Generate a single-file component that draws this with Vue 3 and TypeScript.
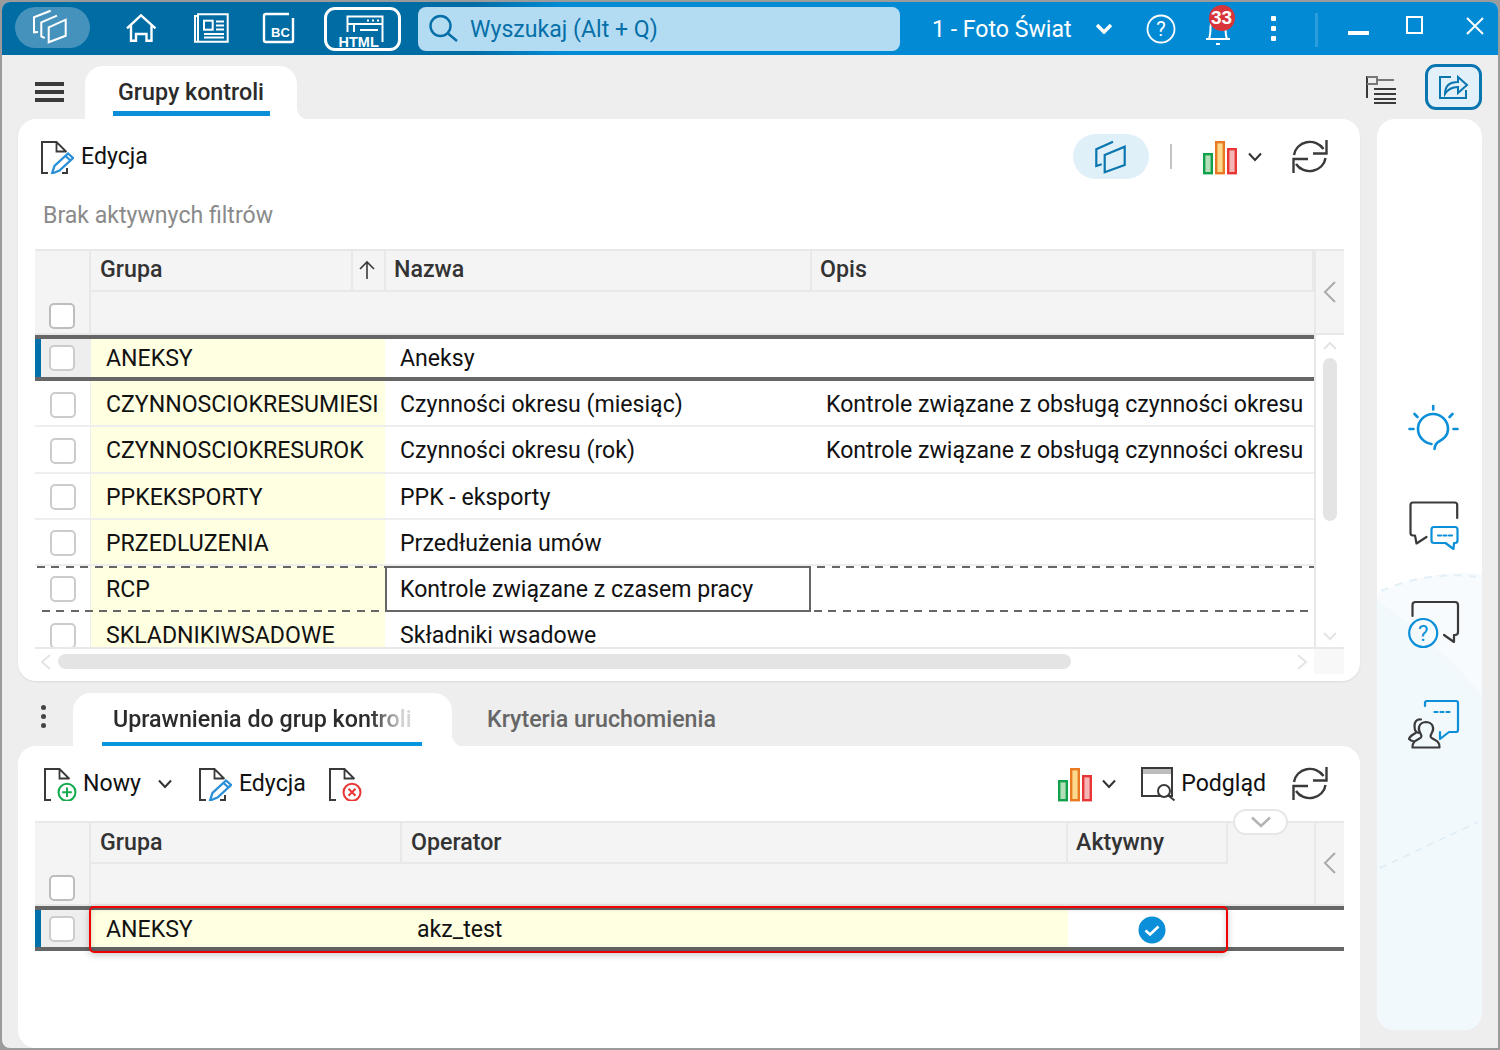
<script setup lang="ts">
interface Row { code: string; name: string; desc: string; sel?: boolean; focus?: boolean }
const rows: Row[] = [
  { code: 'ANEKSY', name: 'Aneksy', desc: '', sel: true },
  { code: 'CZYNNOSCIOKRESUMIESI', name: 'Czynności okresu (miesiąc)', desc: 'Kontrole związane z obsługą czynności okresu' },
  { code: 'CZYNNOSCIOKRESUROK', name: 'Czynności okresu (rok)', desc: 'Kontrole związane z obsługą czynności okresu' },
  { code: 'PPKEKSPORTY', name: 'PPK - eksporty', desc: '' },
  { code: 'PRZEDLUZENIA', name: 'Przedłużenia umów', desc: '' },
  { code: 'RCP', name: 'Kontrole związane z czasem pracy', desc: '', focus: true },
  { code: 'SKLADNIKIWSADOWE', name: 'Składniki wsadowe', desc: '' },
]
</script>

<template>
  <div class="window">
    <svg class="defs" aria-hidden="true">
      <defs>
        <symbol id="doc" viewBox="40 139 34 34">
          <path d="M57 141H42v31h6M62 172h5v-5" fill="none" stroke="#3a3a3a" stroke-width="2" />
          <path d="M56.500 141v9.500H66M56.500 141l10 10" fill="none" stroke="#3a3a3a" stroke-width="1.800" />
        </symbol>
        <symbol id="chart" viewBox="1202 138 36 36">
          <rect x="1204.200" y="153.200" width="7.600" height="19" fill="#b5dfb9" stroke="#12a14b" stroke-width="2.400" />
          <rect x="1216.200" y="141.200" width="7.600" height="31" fill="#fbd98d" stroke="#ea7a22" stroke-width="2.400" />
          <rect x="1228.200" y="148.200" width="7.600" height="24" fill="#f5b5b5" stroke="#e83535" stroke-width="2.400" />
        </symbol>
        <symbol id="refresh" viewBox="1290 137 40 38">
          <path d="M1294 155a16 15 0 0 1 29.500-6M1326.500 140v13.500H1313M1325.500 158a16 15 0 0 1-29.500 6M1293.500 173v-14h14.500" fill="none" stroke="#3a3a3a" stroke-width="2.400" />
        </symbol>
      </defs>
    </svg>

    <header class="titlebar">
      <div class="app-pill">
        <svg width="36" height="36" viewBox="34 10 36 36" fill="none" stroke="#fff" stroke-width="2">
          <path d="M52.700 11.700 36 18.300v15l4-.3M59 16.700l-15.700 6.600v14l3.400 1.700M50.700 28.300l17-7.600v16l-17 6.600z" />
        </svg>
      </div>
      <svg class="ti home" width="36" height="36" viewBox="124 12 36 36" fill="none" stroke="#fff" stroke-width="2.400">
        <path d="M127 29.300 141 16.300l14.500 13M131 26v15.700h5V35h10.500v6.700h5V26" />
      </svg>
      <svg class="ti news" width="36" height="36" viewBox="193 11 36 36" fill="none" stroke="#fff" stroke-width="2">
        <path d="M198 17h-3v25.700h32.700V15.300H198v27.400" />
        <rect x="204" y="21.700" width="8.700" height="9" />
        <path d="M216 22.500h8M216 26.500h8M216 30.500h8M204 35h20M204 38.500h20" />
      </svg>
      <svg class="ti bc" width="36" height="36" viewBox="263 11 36 36" fill="none" stroke="#fff" stroke-width="2.400">
        <path d="M290 15h-23a2 2 0 0 0-2 2v24a2 2 0 0 0 2 2h26a1 1 0 0 0 1-1V19" />
        <text x="272" y="38" class="svg-bold" font-size="13" fill="#fff" stroke="none">BC</text>
      </svg>
      <div class="html-btn">
        <svg width="77" height="44" viewBox="324 7 77 44" fill="none" stroke="#fff" stroke-width="2">
          <path d="M347.500 32V16.500h35V42M347.500 24h34.500M354 24v8M360 30h18" />
          <path d="M367 20.500h2M372 20.500h2M377 20.500h2" />
          <text x="338.500" y="47" class="svg-bold" font-size="14.500" fill="#fff" stroke="none">HTML</text>
        </svg>
      </div>
      <div class="search">
        <svg width="32" height="32" viewBox="428 13 32 32" fill="none" stroke="#066fa8" stroke-width="2.400">
          <circle cx="440.500" cy="26" r="10" /><path d="M448 33.500 457 41" />
        </svg>
        <span>Wyszukaj (Alt + Q)</span>
      </div>
      <span class="company">1 - Foto Świat</span>
      <svg class="ti chev" width="20" height="14" viewBox="0 0 20 14" fill="none" stroke="#fff" stroke-width="3.400">
        <path d="M3 3l7 7 7-7" />
      </svg>
      <svg class="ti help" width="30" height="30" viewBox="0 0 30 30" fill="none" stroke="#fff" stroke-width="1.800">
        <circle cx="15" cy="15" r="13.500" />
        <text x="15" y="22" text-anchor="middle" class="svg-reg" font-size="20" fill="#fff" stroke="none">?</text>
      </svg>
      <div class="bell">
        <svg width="26" height="32" viewBox="0 0 26 32" fill="none" stroke="#fff" stroke-width="2">
          <path d="M1 25h24M4 25c1.500-4 1.500-8 1.500-12a7.500 7.500 0 0 1 15 0c0 4 0 8 1.500 12M11 30h4" />
        </svg>
        <b class="badge">33</b>
      </div>
      <div class="kebab"><i /><i /><i /></div>
      <div class="title-sep" />
      <div class="win-min" />
      <div class="win-max" />
      <svg class="win-close" width="18" height="18" viewBox="0 0 18 18" stroke="#fff" stroke-width="2"><path d="M1 1l16 16M17 1 1 17" /></svg>
    </header>

    <div class="top-strip">
      <div class="burger"><i /><i /><i /></div>
      <div class="tab main-tab"><span>Grupy kontroli</span></div>
      <svg class="tree" width="32" height="30" viewBox="1365 76 32 30" fill="none" stroke="#3a3a3a" stroke-width="2">
        <path d="M1367 77v22" /><path d="M1367 78h10v7h-10M1377 81h17" stroke="#777" />
        <path d="M1374 90h22M1374 95h22M1374 100h22M1374 104h22" />
      </svg>
      <div class="share-btn">
        <svg width="32" height="30" viewBox="1437 75 32 30" fill="none" stroke="#0a76b0" stroke-width="2">
          <path d="M1450 80h-11v21h26v-8" />
          <path d="M1444 97c0-8 5-12 13-12v-5l9 8-9 8v-6c-6 0-10 2-13 7z" />
        </svg>
      </div>
    </div>

    <div class="main">
      <div class="left">
        <section class="card card-top">
          <div class="toolbar tb-a">
            <svg class="ic34" viewBox="40 139 34 34">
              <use href="#doc" x="40" y="139" width="34" height="34" />
              <path d="M52 172.500l2.500-7.500 13.500-12.500 5 4.500-13.500 12.500zM65.500 155l5 4.500" fill="#fff" stroke="#2b8fd8" stroke-width="2.300" />
            </svg>
            <span class="tool-text ml7">Edycja</span>
            <div class="view-pill">
              <svg width="34" height="36" viewBox="1095 139 34 36" fill="none" stroke="#0a76b0" stroke-width="2.200">
                <path d="M1105.700 155l20-8.300V165l-20 7.300zM1114 141.700l-16.700 7.600V166l5.400-1.700" />
              </svg>
            </div>
            <div class="tool-sep" />
            <svg class="chart-a" width="36" height="36"><use href="#chart" width="36" height="36" /></svg>
            <svg class="chev-a" width="16" height="10" viewBox="0 0 16 10" fill="none" stroke="#333" stroke-width="2"><path d="M2 1.500l6 6.500 6-6.500" /></svg>
            <svg class="refresh-a" width="40" height="38"><use href="#refresh" width="40" height="38" /></svg>
          </div>
          <div class="filters">Brak aktywnych filtrów</div>

          <div class="table">
            <div class="head head-a">
              <div class="hc check-cell"><span class="cb" /></div>
              <div class="hc title">Grupa</div>
              <div class="hc sort">
                <svg width="18" height="20" viewBox="0 0 18 20" fill="none" stroke="#3a3a3a" stroke-width="1.600"><path d="M9 19V2M2 9l7-7 7 7" /></svg>
              </div>
              <div class="hc title t8">Nazwa</div>
              <div class="hc title t8">Opis</div>
              <div class="hc side">
                <svg width="14" height="24" viewBox="0 0 14 24" fill="none" stroke="#aaa" stroke-width="2"><path d="M12 2 2 12l10 10" /></svg>
              </div>
              <div class="hc filter-row" />
            </div>
            <div class="body">
              <div class="rows">
                <div v-for="r in rows" :key="r.code" class="row" :class="{ sel: r.sel, focus: r.focus }">
                  <div class="c-check"><span class="cb" /></div>
                  <div class="c-code">{{ r.code }}</div>
                  <div class="c-name">{{ r.name }}</div>
                  <div class="c-desc">{{ r.desc }}</div>
                </div>
              </div>
              <div class="vscroll">
                <svg width="14" height="9" viewBox="0 0 14 9" fill="none" stroke="#e4e4e4" stroke-width="2"><path d="M1 8l6-6 6 6" /></svg>
                <div class="v-thumb" />
                <svg class="v-down" width="14" height="9" viewBox="0 0 14 9" fill="none" stroke="#e4e4e4" stroke-width="2"><path d="M1 1l6 6 6-6" /></svg>
              </div>
            </div>
            <div class="hscroll">
              <svg width="12" height="16" viewBox="0 0 12 16" fill="none" stroke="#e4e4e4" stroke-width="2"><path d="M10 1 2 8l8 7" /></svg>
              <div class="h-thumb" />
              <svg class="h-right" width="12" height="16" viewBox="0 0 12 16" fill="none" stroke="#e4e4e4" stroke-width="2"><path d="M2 1l8 7-8 7" /></svg>
              <div class="h-corner" />
            </div>
          </div>
        </section>

        <div class="sub-strip">
          <div class="kebab dark"><i /><i /><i /></div>
          <div class="tab sub-tab"><span class="fade">Uprawnienia do grup kontroli</span></div>
          <span class="other-tab">Kryteria uruchomienia</span>
        </div>

        <section class="card card-bottom">
          <div class="toolbar tb-b">
            <svg class="ic34" viewBox="40 139 34 34">
              <use href="#doc" x="40" y="139" width="34" height="34" />
              <circle cx="64" cy="164.300" r="8.500" fill="#fff" stroke="#14ab50" stroke-width="2" />
              <path d="M64 159.500v9.600M59.200 164.300h9.600" stroke="#14ab50" stroke-width="2" />
            </svg>
            <span class="tool-text ml6">Nowy</span>
            <svg class="chev-b" width="16" height="10" viewBox="0 0 16 10" fill="none" stroke="#333" stroke-width="2"><path d="M2 1.500l6 6.500 6-6.500" /></svg>
            <svg class="ic34 ed-b" viewBox="40 139 34 34">
              <use href="#doc" x="40" y="139" width="34" height="34" />
              <path d="M52 172.500l2.500-7.500 13.500-12.500 5 4.500-13.500 12.500zM65.500 155l5 4.500" fill="#fff" stroke="#2b8fd8" stroke-width="2.300" />
            </svg>
            <span class="tool-text ml7">Edycja</span>
            <svg class="ic34 del-b" viewBox="40 139 34 34">
              <use href="#doc" x="40" y="139" width="34" height="34" />
              <circle cx="64" cy="164.300" r="8.500" fill="#fff" stroke="#e83535" stroke-width="2" />
              <path d="M60.500 160.800l7 7M67.500 160.800l-7 7" stroke="#e83535" stroke-width="2" />
            </svg>
            <svg class="chart-b" width="36" height="36"><use href="#chart" width="36" height="36" /></svg>
            <svg class="chev-c" width="16" height="10" viewBox="0 0 16 10" fill="none" stroke="#333" stroke-width="2"><path d="M2 1.500l6 6.500 6-6.500" /></svg>
            <svg class="prev-b" width="36" height="36" viewBox="1140 766 36 36" fill="none" stroke="#3a3a3a" stroke-width="2">
              <rect x="1142" y="768" width="30" height="28" />
              <rect x="1143" y="769" width="28" height="5" fill="#bdbdbd" stroke="none" />
              <circle cx="1164" cy="791" r="6" fill="#fff" /><path d="M1168.500 795.500l6 5" />
            </svg>
            <span class="tool-text ml5">Podgląd</span>
            <svg class="refresh-b" width="40" height="38"><use href="#refresh" width="40" height="38" /></svg>
          </div>

          <div class="table">
            <div class="head head-b">
              <div class="hc check-cell"><span class="cb" /></div>
              <div class="hc title">Grupa</div>
              <div class="hc title">Operator</div>
              <div class="hc title t8">Aktywny</div>
              <div class="hc blank" />
              <div class="hc side">
                <svg width="14" height="24" viewBox="0 0 14 24" fill="none" stroke="#aaa" stroke-width="2"><path d="M12 2 2 12l10 10" /></svg>
              </div>
              <div class="hc filter-row" />
            </div>
            <div class="collapse">
              <svg width="22" height="12" viewBox="0 0 22 12" fill="none" stroke="#b5b5b5" stroke-width="2.600"><path d="M2 1.500l9 8.500 9-8.500" /></svg>
            </div>
            <div class="row2 sel">
              <div class="c-check"><span class="cb" /></div>
              <div class="c-code">ANEKSY</div>
              <div class="c-op">akz_test</div>
              <div class="c-act">
                <svg width="28" height="28" viewBox="0 0 28 28"><circle cx="14" cy="14" r="13.500" fill="#0a8fd8" /><path d="M7.500 14.500l4.500 4 8.500-8" fill="none" stroke="#fff" stroke-width="2.600" /></svg>
              </div>
              <div />
              <div class="red-mark" />
            </div>
          </div>
        </section>
      </div>

      <aside class="panel">
        <svg class="panel-bg" viewBox="1377 119 105 911" aria-hidden="true">
          <path d="M1377 594C1410 578 1445 570 1482 574V1030H1377z" fill="#f7fbfe" />
          <path d="M1377 600C1420 630 1455 665 1482 695V1030H1377z" fill="#f2f9fd" />
          <path d="M1381 591C1410 578 1445 572 1476 577" fill="none" stroke="#e3f0f8" stroke-width="2" stroke-dasharray="8 7" />
          <path d="M1380 868 1478 822" fill="none" stroke="#dcecf6" stroke-width="1.500" stroke-dasharray="7 6" />
        </svg>
        <svg class="side-ic first" viewBox="1399.500 399 60 60" fill="none" stroke="#0a8fd8" stroke-width="2.600" stroke-linecap="round">
          <path d="M1431 444c-7-1-13.500-7-13.500-15a15 15 0 1 1 30 0c0 7-5 10-9 12.500-2 1-4 3-4.500 7.500" />
          <path d="M1432.700 406v3.500M1414 414l3 3M1449 417l3-3M1409 429h4M1453 429h4" />
        </svg>
        <svg class="side-ic" viewBox="1399.500 495 60 60" fill="none" stroke-width="2.200" stroke-linecap="round" stroke-linejoin="round">
          <path d="M1456.700 518v-13a2.500 2.500 0 0 0-2.500-2.500h-41.700a2.500 2.500 0 0 0-2.500 2.500v28a2.500 2.500 0 0 0 2.500 2.500h2l1.500 8 10-6.500" stroke="#3a3a3a" />
          <path d="M1433.500 527h21a2.500 2.500 0 0 1 2.500 2.500v11a2.500 2.500 0 0 1-2.500 2.500h-1l-.5 6-8-6h-11.500a2.500 2.500 0 0 1-2.500-2.500v-11a2.500 2.500 0 0 1 2.500-2.500z" stroke="#0a8fd8" />
          <path d="M1437.500 535.500h3M1443 535.500h3M1448.500 535.500h3" stroke="#0a8fd8" />
        </svg>
        <svg class="side-ic" viewBox="1399.500 595 60 60" fill="none" stroke-width="2.200" stroke-linecap="round" stroke-linejoin="round">
          <path d="M1412 616v-11a3 3 0 0 1 3-3h39.500a3 3 0 0 1 3 3v27a3 3 0 0 1-3 3h-1v7l-10-7" stroke="#3a3a3a" />
          <circle cx="1422.700" cy="633" r="14" stroke="#0a8fd8" />
          <text x="1422.700" y="641" text-anchor="middle" class="svg-reg" font-size="22" fill="#0a8fd8" stroke="none">?</text>
        </svg>
        <svg class="side-ic" viewBox="1399.500 695 60 60" fill="none" stroke-width="2.200" stroke-linecap="round" stroke-linejoin="round">
          <path d="M1424.500 706v-3a2 2 0 0 1 2-2h29a2 2 0 0 1 2 2v27a2 2 0 0 1-2 2h-7l-9 7v-7" stroke="#0a8fd8" />
          <path d="M1434 712h3M1440 712h3M1446 712h3" stroke="#0a8fd8" />
          <path d="M1421 747.500h-9c0-6 3-7 7-9 3-1.500 2-3 .5-6-2-3-2-10 6-10.500 8 .5 8 7.500 6 10.500-1.500 3-2.500 4.500.5 6 4 2 7 3 7 9z" stroke="#3a3a3a" />
          <path d="M1419 733c-4 0-5-3-5-7 0-4 2-7 6.500-6.500M1415 733c-3 2-6 3-6.500 6 2 2 3 2 4 2" stroke="#3a3a3a" />
        </svg>
      </aside>
    </div>
  </div>
</template>

<style>
html, body { margin: 0; background: #9b9b9b; }
</style>

<style scoped>
.window {
  position: relative;
  width: 1496px;
  height: 1046px;
  margin: 2px;
  overflow: hidden;
  display: flex;
  flex-direction: column;
  background: #eeeeee;
  border-radius: 8px 8px 0 8px;
  font-family: Roboto, "Liberation Sans", sans-serif;
  font-size: 23.1px;
  color: #111;
}
.defs { position: absolute; width: 0; height: 0; }
svg { display: block; flex: none; }
.svg-bold { font-family: "Liberation Sans", sans-serif; font-weight: 700; }
.svg-reg { font-family: Roboto, sans-serif; }

.titlebar {
  flex: none;
  height: 53px;
  display: flex;
  align-items: center;
  background: linear-gradient(90deg, #006ca4 0, #006ca4 470px, #028bd4 560px);
  color: #fff;
}
.app-pill {
  margin-left: 13px;
  width: 75px;
  height: 41px;
  border-radius: 21px;
  background: #4593bd;
  display: flex;
  align-items: center;
  padding-left: 17px;
  box-sizing: border-box;
  margin-top: -3px;
}
.ti.home { margin-left: 34px; }
.ti.news { margin-left: 33px; margin-top: -2px; }
.ti.bc { margin-left: 33px; margin-top: -2px; }
.html-btn {
  margin-left: 26px;
  width: 77px;
  height: 44px;
  box-sizing: border-box;
  border: 3px solid #fff;
  border-radius: 11px;
  position: relative;
  margin-top: 1px;
  overflow: hidden;
}
.html-btn svg { position: absolute; left: -3px; top: -3px; }
.search {
  margin-left: 17px;
  width: 482px;
  height: 44px;
  margin-top: 1px;
  box-sizing: border-box;
  background: #b3dcf2;
  border-radius: 8px;
  display: flex;
  align-items: center;
  padding-left: 10px;
  color: #066fa8;
}
.search span { margin-left: 10px; }
.company { margin-left: 32px; margin-top: 1px; }
.chev { margin-left: 22px; }
.help { margin-left: 32px; }
.bell { position: relative; margin-left: 29px; width: 26px; height: 32px; margin-top: 2px; }
.badge {
  position: absolute;
  left: 4px;
  top: -9px;
  width: 26px;
  height: 26px;
  border-radius: 50%;
  background: #d8343a;
  color: #fff;
  font: 700 19px/26px "Liberation Sans", sans-serif;
  text-align: center;
}
.kebab { display: flex; flex-direction: column; gap: 5px; margin-left: 40px; }
.kebab i { width: 5px; height: 5px; background: #fff; border-radius: 1px; }
.kebab.dark { margin-left: 0; gap: 4px; margin-top: 0; width: 5px; flex: none; }
.kebab.dark i { background: #444; border-radius: 50%; }
.title-sep { width: 3px; height: 34px; background: #2a9ddd; margin-left: 39px; margin-top: 2px; }
.win-min { width: 21px; height: 4px; background: #fff; margin-left: 30px; margin-top: 8px; }
.win-max { width: 17px; height: 18px; box-sizing: border-box; border: 2px solid #fff; margin-left: 37px; margin-top: -8px; }
.win-close { margin-left: 43px; margin-top: -6px; }

.top-strip {
  flex: none;
  height: 64px;
  display: flex;
  align-items: flex-end;
  position: relative;
}
.burger { display: flex; flex-direction: column; gap: 4px; margin-left: 33px; margin-bottom: 17px; }
.burger i { width: 29px; height: 4px; background: #3a3a3a; }
.tab {
  position: relative;
  background: #fff;
  border-radius: 18px 18px 0 0;
  box-sizing: border-box;
  font-weight: 500;
  font-size: 23.250px;
  color: #2b2b2b;
}
.tab::after {
  content: "";
  position: absolute;
  right: -9px;
  bottom: 0;
  width: 10px;
  height: 16px;
  background: radial-gradient(ellipse 10px 16px at 100% 0, transparent 98%, #fff 100%);
}
.main-tab {
  margin-left: 21px;
  width: 212px;
  height: 53px;
  text-align: center;
  padding-top: 12px;
}
.main-tab::before {
  content: "";
  position: absolute;
  left: 28px;
  width: 157px;
  bottom: 3px;
  height: 5px;
  background: #0a8fd8;
}
.tree { margin-left: auto; margin-right: 28px; margin-bottom: 14px; }
.share-btn {
  width: 57px;
  height: 46px;
  box-sizing: border-box;
  border: 3px solid #0a76b0;
  border-radius: 11px;
  background: #e1f0f9;
  margin-right: 16px;
  margin-bottom: 9px;
  display: flex;
  align-items: center;
  justify-content: center;
}

.main { flex: 1; min-height: 0; display: flex; padding-left: 16px; gap: 17px; }
.left { width: 1342px; flex: none; display: flex; flex-direction: column; }
.card { background: #fff; flex: none; }
.card-top { height: 562px; border-radius: 18px; box-shadow: 0 1px 2px rgba(0, 0, 0, .08); }
.card-bottom { height: 302px; border-radius: 18px 18px 0 18px; position: relative; }

.toolbar { display: flex; align-items: center; height: 75px; }
.tb-a { padding-left: 22px; }
.tb-b { padding-left: 25px; }
.ic34 { width: 34px; height: 34px; }
.tool-text { color: #111; }
.ml5 { margin-left: 5px; }
.ml6 { margin-left: 6px; }
.ml7 { margin-left: 7px; }
.view-pill {
  margin-left: auto;
  width: 76px;
  height: 45px;
  border-radius: 23px;
  background: #e0f0f9;
  display: flex;
  align-items: center;
  justify-content: center;
}
.tool-sep { width: 2px; height: 25px; background: #c4c4c4; margin-left: 21px; }
.chart-a { margin-left: 30px; }
.chev-a { margin-left: 9px; }
.refresh-a { margin: -2px 30px 0 27px; }
.chev-b { margin-left: 16px; }
.ed-b { margin-left: 25px; }
.del-b { margin-left: 22px; }
.chart-b { margin-left: auto; }
.chev-c { margin-left: 8px; }
.prev-b { margin-left: 23px; }
.refresh-b { margin: -2px 30px 0 24px; }

.filters { height: 55px; line-height: 44px; padding-left: 25px; color: #8a8a8a; }

.table { margin-left: 17px; width: 1309px; position: relative; }
.head {
  display: grid;
  background: #f4f4f4;
  border-top: 2px solid #e8e8e8;
  border-bottom: 2px solid #e8e8e8;
  box-sizing: border-box;
}
.head-a {
  grid-template-columns: 56px 262px 33px 426px 502px 30px;
  grid-template-rows: 41px 43px;
  height: 86px;
}
.head-b {
  grid-template-columns: 56px 311px 666px 160px 86px 30px;
  grid-template-rows: 41px 42px;
  height: 85px;
}
.hc { box-sizing: border-box; min-width: 0; }
.check-cell {
  grid-row: 1 / 3;
  border-right: 2px solid #e8e8e8;
  display: flex;
  align-items: flex-end;
  padding: 0 0 6px 14px;
}
.head-b .check-cell { padding-bottom: 5px; }
.title {
  border-right: 2px solid #e8e8e8;
  border-bottom: 2px solid #e8e8e8;
  padding-left: 9px;
  line-height: 37px;
  font-weight: 500;
  font-size: 23.200px;
  color: #333;
}
.head-b .title { line-height: 39px; }
.t8 { padding-left: 8px; }
.sort {
  border-right: 2px solid #e8e8e8;
  border-bottom: 2px solid #e8e8e8;
  display: flex;
  align-items: center;
  justify-content: center;
  padding: 0 3px 2px 0;
}
.side {
  grid-column: -2 / -1;
  grid-row: 1 / 3;
  border-left: 2px solid #e8e8e8;
  display: flex;
  align-items: center;
  justify-content: center;
  padding-bottom: 2px;
}
.head-b .side { padding-bottom: 4px; }
.filter-row { grid-column: 2 / -2; grid-row: 2; }
.cb {
  display: block;
  width: 26px;
  height: 26px;
  box-sizing: border-box;
  background: #fff;
  border: 2px solid #bdbdbd;
  border-radius: 5px;
}

.body { display: flex; height: 312px; border-bottom: 2px solid #e8e8e8; box-sizing: content-box; }
.rows { width: 1281px; height: 312px; overflow: hidden; flex: none; border-right: 2px solid #e8e8e8; box-sizing: border-box; }
.row {
  position: relative;
  display: grid;
  grid-template-columns: 56px 294px 426px 503px;
  height: 46.200px;
  box-sizing: border-box;
  border-bottom: 2px solid #eee;
}
.row > div { display: flex; align-items: center; box-sizing: border-box; white-space: nowrap; overflow: hidden; padding-top: 3px; }
.row.sel > div, .row.focus > div { padding-top: 0; }
.c-check { padding-left: 15px; border-right: 1px solid #eee; }
.c-check .cb { border-color: #ccc; }
.c-code { background: #ffffe2; padding-left: 15px; }
.c-name { padding-left: 15px; }
.c-desc { padding-left: 15px; }
.sel { border-top: 4px solid #666; border-bottom: 4px solid #666; }
.sel .c-check { background: #eeeeee; border-left: 6px solid #0070aa; padding-left: 8px; border-right: 0; }
.focus { border-bottom: 0; }
.focus .c-name { position: relative; z-index: 1; border: 2px solid #666; padding-left: 13px; background: #fff; }
.focus::before, .focus::after {
  content: "";
  position: absolute;
  height: 2px;
  right: 0;
}
.focus::before { left: 2px; top: 0; background: repeating-linear-gradient(90deg, #666 0 8px, transparent 8px 14.450px); }
.focus::after { left: 7px; top: 44px; background: repeating-linear-gradient(90deg, #666 0 8px, transparent 8px 14.300px); }

.vscroll {
  width: 28px;
  flex: none;
  display: flex;
  flex-direction: column;
  align-items: center;
  padding: 6px 0 6px;
  box-sizing: border-box;
  height: 312px;
}
.v-thumb { width: 14px; height: 163px; border-radius: 7px; background: #e4e4e4; margin-top: 8px; }
.v-down { margin-top: auto; }
.hscroll { display: flex; align-items: center; height: 25px; padding-left: 5px; }
.h-thumb { width: 1013px; height: 15px; border-radius: 8px; background: #e4e4e4; margin-left: 6px; }
.h-right { margin-left: 225px; }
.h-corner { width: 30px; height: 25px; background: #f8f8f8; margin-left: auto; }

.sub-strip { flex: none; height: 65px; display: flex; align-items: flex-end; }
.sub-strip .kebab { margin: 0 0 18px 23px; }
.sub-tab { margin-left: 27px; width: 379px; height: 53px; padding: 12px 0 0 40px; }
.sub-tab::before {
  content: "";
  position: absolute;
  left: 29px;
  width: 320px;
  bottom: 0;
  height: 4px;
  background: #0a95df;
}
.fade { -webkit-mask-image: linear-gradient(90deg, #000 86%, rgba(0, 0, 0, .2) 97%); mask-image: linear-gradient(90deg, #000 86%, rgba(0, 0, 0, .2) 97%); display: inline-block; }
.other-tab { margin-left: 35px; height: 41px; font-weight: 500; font-size: 23.200px; color: #666; }

.collapse {
  position: absolute;
  left: 1198px;
  top: -12px;
  z-index: 2;
  width: 55px;
  height: 26px;
  box-sizing: border-box;
  background: #fff;
  border: 2px solid #e6e6e6;
  border-radius: 13px;
  display: flex;
  align-items: center;
  justify-content: center;
}
.row2 {
  position: relative;
  display: grid;
  grid-template-columns: 56px 311px 666px 161px 115px;
  height: 45px;
  box-sizing: border-box;
}
.row2 > div { display: flex; align-items: center; box-sizing: border-box; padding-top: 2px; }
.row2 > .c-check { padding-top: 0; }
.row2 .c-code { background: #ffffe2; padding-left: 15px; }
.c-op { background: #ffffe2; padding-left: 15px; }
.row2 > .c-act { justify-content: center; padding-left: 6px; }
.row2 > .red-mark {
  position: absolute;
  left: 54px;
  top: -4px;
  width: 1139px;
  height: 47px;
  box-sizing: border-box;
  border: 2px solid #f00000;
  border-radius: 5px;
  box-shadow: 0 2px 7px rgba(0, 0, 0, .22), inset 0 0 6px rgba(0, 0, 0, .18);
}

.panel {
  position: relative;
  width: 105px;
  height: 911px;
  flex: none;
  background: #fff;
  border-radius: 18px;
  overflow: hidden;
  display: flex;
  flex-direction: column;
  align-items: center;
  padding-top: 280px;
  box-sizing: border-box;
  gap: 40px;
}
.panel-bg { position: absolute; inset: 0; width: 105px; height: 911px; }
.side-ic { position: relative; width: 60px; height: 60px; }
.side-ic.first { margin-bottom: -4px; }
</style>
